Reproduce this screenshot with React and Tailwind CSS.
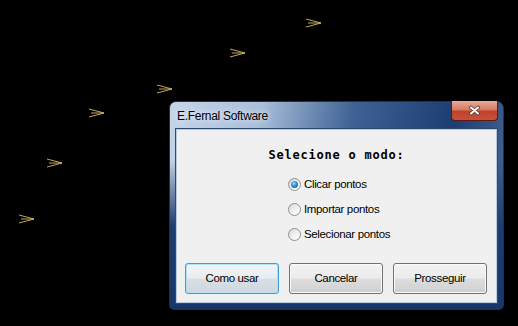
import React from "react";

const arrows = [
  { x: 306, y: 18 },
  { x: 230, y: 48 },
  { x: 157, y: 84 },
  { x: 89, y: 108 },
  { x: 47, y: 158 },
  { x: 19, y: 214 },
];

function Arrow({ x, y }) {
  return (
    <svg className="absolute" style={{ left: x, top: y }} width="16" height="10" viewBox="0 0 16 10">
      <g stroke="#d8b966" strokeWidth="0.9" fill="none">
        <path d="M0 1 L15 5" />
        <path d="M2 5 L15 5" />
        <path d="M0 9 L15 5" />
      </g>
    </svg>
  );
}

function Radio({ checked, label }) {
  return (
    <label className="flex items-center gap-[3px] h-[25px]">
      <span className="relative w-[13px] h-[13px] rounded-full border border-[#8f8f8f] bg-[linear-gradient(135deg,#d6d6d6_0%,#f4f4f4_60%,#ffffff_100%)] flex items-center justify-center">
        {checked && (
          <span className="w-[7px] h-[7px] rounded-full bg-[radial-gradient(circle_at_40%_35%,#9fd6f7_0%,#2f8fd6_45%,#0d4f92_100%)]" />
        )}
      </span>
      <span className="text-[11.5px] tracking-[-0.35px] text-black">{label}</span>
    </label>
  );
}

function Btn({ children, focused }) {
  return (
    <button
      className={
        focused
          ? "w-[94px] h-[31px] rounded-[3px] border border-[#3c9bd8] shadow-[inset_0_0_0_1px_#b3e2f8] bg-[linear-gradient(180deg,#f1f5f8_0%,#e7edf1_48%,#d8dfe4_52%,#d1d8dd_100%)] text-[11.5px] tracking-[-0.35px] text-black"
          : "w-[94px] h-[31px] rounded-[3px] border border-[#707070] shadow-[inset_0_0_0_1px_#fbfbfb] bg-[linear-gradient(180deg,#f2f2f2_0%,#ebebeb_48%,#dddddd_52%,#cfcfcf_100%)] text-[11.5px] tracking-[-0.35px] text-black"
      }
    >
      {children}
    </button>
  );
}

export default function App() {
  return (
    <div className="relative w-[518px] h-[326px] bg-black overflow-hidden font-['Liberation_Sans',Arial,sans-serif]">
      {arrows.map((a, i) => (
        <Arrow key={i} x={a.x} y={a.y} />
      ))}

      <div className="absolute left-[169px] top-[101px] w-[335px] h-[209px] rounded-t-[7px] rounded-b-[5px] border border-[#22314a] bg-[linear-gradient(180deg,rgba(0,0,0,0)_0%,rgba(0,0,0,0)_28%,#1d3c6f_60%,#19366a_100%),linear-gradient(100deg,#c6d5e8_0%,#a9bfda_25%,#3f6194_50%,#1d3d71_78%,#4f6f9d_100%)] flex flex-col">
        <div className="h-[27px] flex items-center justify-between pl-[7px] pr-[5px]">
          <span className="text-[12px] tracking-[-0.3px] text-black [text-shadow:0_0_6px_#ffffff]">E.Fernal Software</span>
          <div className="self-start w-[47px] h-[20px] -mt-px rounded-b-[4px] border border-[#5a1c12] border-t-0 bg-[linear-gradient(180deg,#e9ab98_0%,#d57a64_45%,#c2412b_55%,#c9503a_100%)] flex items-center justify-center">
            <svg width="13" height="11" viewBox="0 0 13 11">
              <g strokeLinecap="round">
                <path d="M3 2.5 L10 8.5 M10 2.5 L3 8.5" stroke="#5a3a34" strokeWidth="3.6" />
                <path d="M3 2.5 L10 8.5 M10 2.5 L3 8.5" stroke="#ffffff" strokeWidth="2" />
              </g>
            </svg>
          </div>
        </div>
        <div className="mx-[6px] h-[174px] border border-[#b9c9dc] shadow-[0_0_0_1px_#2b4a78] bg-[#f0f0f0] flex flex-col">
          <div className="text-center pt-[16px] font-['DejaVu_Sans_Mono',monospace] font-bold text-[12px] tracking-[0.78px] text-black">
            Selecione o modo:
          </div>
          <div className="flex flex-col pl-[111px] mt-[8px]">
            <Radio checked label="Clicar pontos" />
            <Radio label="Importar pontos" />
            <Radio label="Selecionar pontos" />
          </div>
          <div className="mt-auto mb-[8px] flex gap-[10px] px-[8px]">
            <Btn focused>Como usar</Btn>
            <Btn>Cancelar</Btn>
            <Btn>Prosseguir</Btn>
          </div>
        </div>
      </div>
    </div>
  );
}
